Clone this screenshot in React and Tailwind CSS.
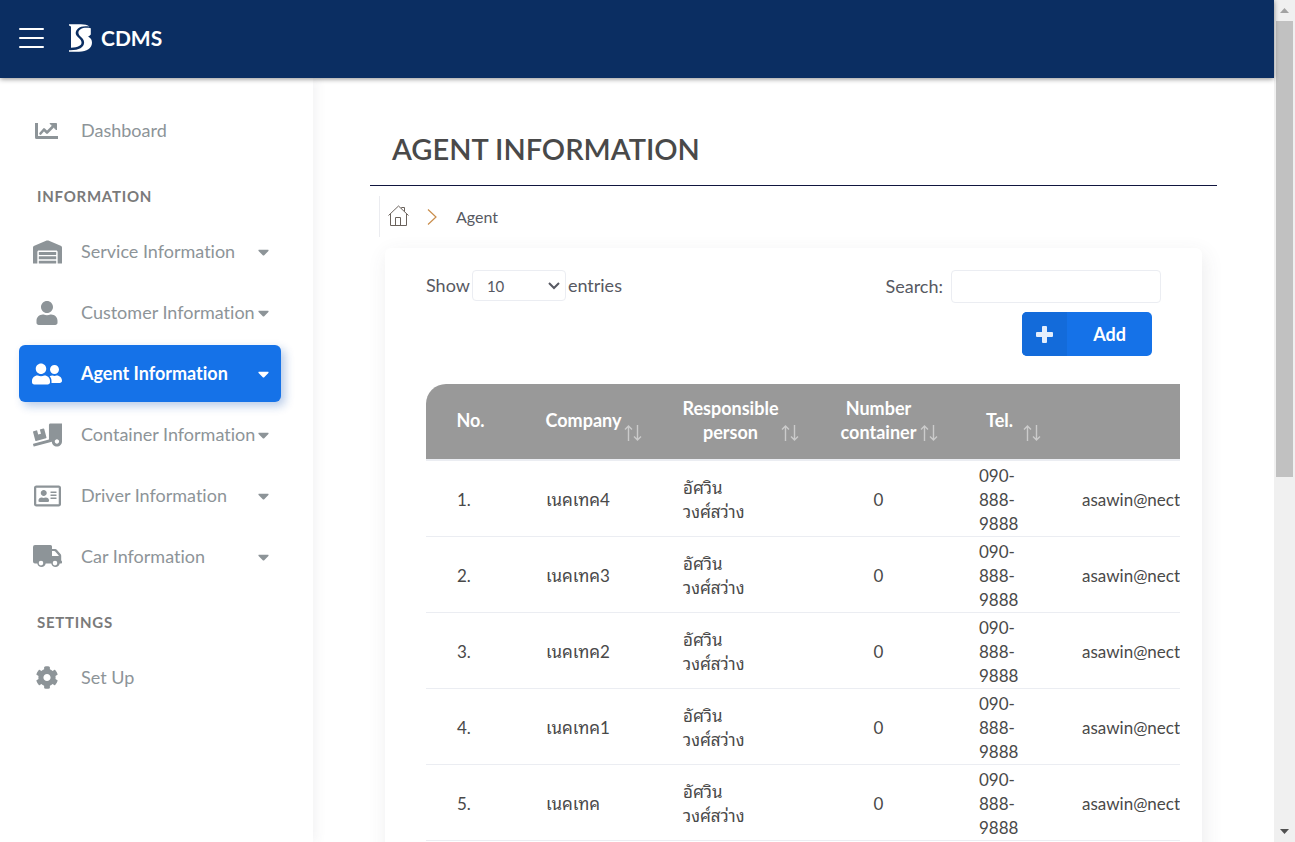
import React from "react";
import {
  FaWarehouse,
  FaUser,
  FaUserFriends,
  FaTruckLoading,
  FaRegAddressCard,
  FaCog,
  FaCaretDown,
} from "react-icons/fa";

function ChartIcon({ className }) {
  return (
    <svg viewBox="0 0 24 18" className={className} fill="none" stroke="currentColor">
      <path d="M1.500 1v14.500H23" strokeWidth="3" strokeLinecap="butt" strokeLinejoin="round" />
      <path d="M5.500 11.500 9 7.500l3 3L17.500 5" strokeWidth="2.600" strokeLinecap="round" strokeLinejoin="round" />
      <path d="M15 1.500h6.500V8z" fill="currentColor" strokeWidth="1" strokeLinejoin="round" />
    </svg>
  );
}

function TruckIcon({ className }) {
  return (
    <svg viewBox="0 0 29 23" fill="currentColor" className={className}>
      <path
        fillRule="evenodd"
        d="M2 0h15.500a1.500 1.500 0 0 1 1.500 1.500V4h3.200c.6 0 1.200.2 1.600.7l3.900 4.600c.3.400.5.9.5 1.400V15.500c.6.200.8.600.8 1.200v.8c0 .6-.4 1-1 1h-1.300a4.300 4.300 0 0 1-8.400 0h-5.600a4.300 4.300 0 0 1-8.400 0H2a2 2 0 0 1-2-2V2a2 2 0 0 1 2-2zM19 6v5h6.700v-.4L22.200 6.400a1 1 0 0 0-.8-.4H19zM8 15.800a2.300 2.300 0 1 0 0 4.600 2.300 2.300 0 0 0 0-4.600zm14 0a2.300 2.300 0 1 0 0 4.600 2.300 2.300 0 0 0 0-4.600z"
      />
    </svg>
  );
}

const information = [
  { label: "Service Information", Icon: FaWarehouse, size: "w-[29px] h-6" },
  { label: "Customer Information", Icon: FaUser, size: "w-6 h-6" },
  { label: "Agent Information", Icon: FaUserFriends, size: "w-[30px] h-6", active: true },
  { label: "Container Information", Icon: FaTruckLoading, size: "w-[29px] h-6" },
  { label: "Driver Information", Icon: FaRegAddressCard, size: "w-[27px] h-6" },
  { label: "Car Information", Icon: TruckIcon, size: "w-[29px] h-[23px]" },
];

const rows = [
  { no: "1.", company: "เนคเทค4" },
  { no: "2.", company: "เนคเทค3" },
  { no: "3.", company: "เนคเทค2" },
  { no: "4.", company: "เนคเทค1" },
  { no: "5.", company: "เนคเทค" },
];

function Logo() {
  return (
    <a href="#home" className="ml-6 flex items-center gap-2 text-white" aria-label="CDMS">
      <svg viewBox="0 0 25 28" className="h-7 w-[25px]" fill="currentColor" aria-hidden="true">
        <path d="M1 .3h12c3.500 0 6.500.7 8.500 2.200-5-.8-9-.2-11.500 1.900C7.500 6.500 7 9.500 8.500 11.500c1.500 2.200 4.500 3.500 5 6.500.5 3.600-3.500 5.500-10.500 5.700V3C2.500 2 1.800 1.600 1 1.500z" />
        <path d="M22.800 4.200v6.400c-.8 1-1.700 1.500-2.700 1.800 2.500 1.400 4 3.400 3.900 6.400C23.800 24.300 19 27.700 11 27.700H1v-1.500c9.500.4 15-2.600 15.100-7.700.1-4.600-5.600-5.900-5.700-9.700C10.300 5.100 15.500 2.800 22.800 4.200z" />
      </svg>
      <span className="pb-px text-[21px] leading-7 font-bold">CDMS</span>
    </a>
  );
}

function NavItem({ label, Icon, size, active, caret = true }) {
  return (
    <li>
      <a
        href="#section"
        aria-current={active ? "page" : undefined}
        className={
          active
            ? "flex h-[57px] items-center rounded-md bg-[#1572e8] pr-3 pl-[13px] font-bold text-white shadow-[4px_4px_10px_rgba(21,84,180,0.3)]"
            : "flex h-[57px] items-center pr-3 pl-[13px] text-[#8d9498]"
        }
      >
        <span className="flex w-[30px] shrink-0 justify-center">
          <Icon className={size} />
        </span>
        <span className="ml-[19px] flex-1 pb-[2px] whitespace-nowrap">{label}</span>
        {caret && <FaCaretDown className="h-[18px] w-[11px] shrink-0" />}
      </a>
    </li>
  );
}

function NavHeading({ children }) {
  return (
    <h2 className="flex h-16 items-center pt-[9px] pl-[18px] text-[15px] font-bold tracking-wider text-[#7a7a7a]">
      {children}
    </h2>
  );
}

function HeaderCell({ children, className, sortable = true }) {
  return (
    <th scope="col" className={className}>
      {children}
      {sortable && (
        <svg
          viewBox="0 0 18 16"
          className="absolute top-[41px] right-[10px] h-4 w-[18px] text-[#cbcbcb]"
          fill="none"
          stroke="currentColor"
          strokeWidth="1.4"
          aria-hidden="true"
        >
          <path d="M4.500 16V1M1 4.500 4.500 1 8 4.500M13.500 0v15M10 11.500l3.500 3.500 3.500-3.500" />
        </svg>
      )}
    </th>
  );
}

export default function App() {
  return (
    <div className="flex h-screen overflow-hidden bg-white font-['Lato','Noto_Sans_Thai_Looped','Loma','Waree','Garuda','Noto_Sans_Thai',sans-serif] text-[18px] leading-6 text-[#494949] [font-variant-ligatures:no-common-ligatures]">
      <div className="flex min-w-0 flex-1 flex-col">
        <header className="relative z-10 flex h-[78px] shrink-0 items-center bg-[#0b2e62] pr-4 pb-[2px] pl-[19px] shadow-[0_1px_5px_rgba(0,0,0,0.45)]">
          <button type="button" aria-label="Toggle menu" className="flex w-[25px] flex-col gap-[7px]">
            <span className="h-[2px] w-full rounded bg-white" />
            <span className="h-[2px] w-full rounded bg-white" />
            <span className="h-[2px] w-full rounded bg-white" />
          </button>
          <Logo />
        </header>

        <div className="flex min-h-0 flex-1">
          <nav className="w-[313px] shrink-0 pt-6 pr-8 pl-[19px] shadow-[4px_0_10px_rgba(69,65,78,0.06)]">
            <ul>
              <NavItem label="Dashboard" Icon={ChartIcon} size="w-6 h-[18px]" caret={false} />
            </ul>
            <NavHeading>INFORMATION</NavHeading>
            <ul className="flex flex-col gap-1">
              {information.map((item) => (
                <NavItem key={item.label} {...item} />
              ))}
            </ul>
            <NavHeading>SETTINGS</NavHeading>
            <ul>
              <NavItem label="Set Up" Icon={FaCog} size="w-6 h-[23px]" caret={false} />
            </ul>
          </nav>

          <main className="min-w-0 flex-1 overflow-hidden px-[57px] pt-[50px]">
            <div className="border-b border-[#11163f] pb-4 pl-[22px]">
              <h1 className="text-[29px] leading-[41px] font-semibold">AGENT INFORMATION</h1>
            </div>

            <ol className="mt-[10px] ml-[9px] flex h-[41px] items-center border-l border-[#ebecf0] pl-2 text-base text-[#575962]">
              <li className="pb-[2px]">
                <a href="#home" aria-label="Home">
                  <svg
                    viewBox="0 0 21 22"
                    className="h-[22px] w-[21px] text-[#6a625c]"
                    fill="none"
                    stroke="currentColor"
                    strokeWidth="1"
                  >
                    <path d="M.5 10.500 10.500 1l10 9.500M2.500 9v11.500h16V9M7.500 20.500v-8h5v8M13.500 3.500v-1h3v4" />
                  </svg>
                </a>
              </li>
              <li className="ml-[18px]" aria-hidden="true">
                <svg viewBox="0 0 10 16" className="h-4 w-[10px] text-[#c98d4b]" fill="none" stroke="currentColor" strokeWidth="1.2">
                  <path d="M1 .5 9 8l-8 7.500" />
                </svg>
              </li>
              <li className="ml-[19px] pt-px">Agent</li>
            </ol>

            <section className="mx-[15px] mt-[11px] h-full rounded-md bg-white pt-[22px] pr-[22px] pl-[41px] shadow-[2px_6px_20px_rgba(69,65,78,0.1)]">
              <div className="flex items-start justify-between pr-[19px] text-[#575962]">
                <div className="flex h-[31px] items-center gap-[2px]">
                  <label htmlFor="length" className="pb-px">Show</label>
                  <span className="relative">
                    <select
                      id="length"
                      defaultValue="10"
                      className="block h-[31px] w-[94px] appearance-none rounded border border-[#ebedf2] bg-white pl-[14px] text-[15px]"
                    >
                      <option>10</option>
                      <option>25</option>
                      <option>50</option>
                      <option>100</option>
                    </select>
                    <svg
                      viewBox="0 0 12 8"
                      className="pointer-events-none absolute top-[12px] right-[6px] h-2 w-3"
                      fill="none"
                      stroke="currentColor"
                      strokeWidth="2"
                      aria-hidden="true"
                    >
                      <path d="M1 1l5 5 5-5" />
                    </svg>
                  </span>
                  <span className="pb-px">entries</span>
                </div>
                <div className="flex items-center gap-2">
                  <label htmlFor="search" className="pb-px">Search:</label>
                  <input id="search" type="search" className="h-[33px] w-[210px] rounded border border-[#ebedf2] px-2" />
                </div>
              </div>

              <div className="mt-[9px] flex justify-end pr-7">
                <button type="button" className="flex h-11 w-[130px] overflow-hidden rounded-[5px] bg-[#1572e8] font-bold text-white">
                  <span className="flex h-full w-[45px] items-center justify-center bg-[#136bda] text-[#e4eefc]">
                    <svg viewBox="0 0 17 17" className="h-[17px] w-[17px]" fill="currentColor" aria-hidden="true">
                      <path d="M7 0h3q1 0 1 1v5h5q1 0 1 1v3q0 1-1 1h-5v5q0 1-1 1H7q-1 0-1-1v-5H1q-1 0-1-1V7q0-1 1-1h5V1q0-1 1-1z" />
                    </svg>
                  </span>
                  <span className="flex h-full flex-1 items-center justify-center">Add</span>
                </button>
              </div>

              <div className="mt-7 overflow-x-auto overflow-y-hidden rounded-tl-[20px] pb-6">
                <table className="w-[1025px] table-fixed border-collapse">
                  <thead>
                    <tr className="h-[76px] border-b-2 border-[#ebedf2] bg-[#999] text-white">
                      <HeaderCell className="w-[89px] pb-[3px]" sortable={false}>No.</HeaderCell>
                      <HeaderCell className="relative w-[137px] pb-[3px]">Company</HeaderCell>
                      <HeaderCell className="relative w-[157px] px-[30px] pb-[3px]">Responsible person</HeaderCell>
                      <HeaderCell className="relative w-[139px] px-[30px] pb-[3px]">Number container</HeaderCell>
                      <HeaderCell className="relative w-[103px] pb-[3px]">Tel.</HeaderCell>
                      <HeaderCell className="relative pb-[3px]">Email</HeaderCell>
                    </tr>
                  </thead>
                  <tbody className="text-[17px]">
                    {rows.map((row) => (
                      <tr key={row.no} className="h-[76px] border-b border-[#ebedf2]">
                        <td className="pt-[3px] pl-[31px]">{row.no}</td>
                        <td className="pt-[3px] pl-[31px]">{row.company}</td>
                        <td className="pt-[3px] pl-[31px]">
                          อัศวิน
                          <br />
                          วงศ์สว่าง
                        </td>
                        <td className="pt-[3px] text-center">0</td>
                        <td className="px-[31px] pt-[3px]">090-888-9888</td>
                        <td className="pt-[3px] pl-[31px]">asawin@nectec.or.th</td>
                      </tr>
                    ))}
                  </tbody>
                </table>
              </div>
            </section>
          </main>
        </div>
      </div>

      <div className="flex w-[21px] shrink-0 flex-col items-center bg-[#f0f0f0]" aria-hidden="true">
        <div className="flex h-[21px] items-center">
          <svg viewBox="0 0 9 5" className="h-[5px] w-[9px] fill-[#a3a3a3]">
            <path d="M0 5 4.500 0 9 5z" />
          </svg>
        </div>
        <div className="flex min-h-0 w-full flex-1 flex-col items-center">
          <div className="h-[57%] w-[17px] bg-[#c1c1c1]" />
        </div>
        <div className="flex h-[21px] items-center">
          <svg viewBox="0 0 9 5" className="h-[5px] w-[9px] fill-[#505050]">
            <path d="M0 0h9L4.500 5z" />
          </svg>
        </div>
      </div>
    </div>
  );
}
